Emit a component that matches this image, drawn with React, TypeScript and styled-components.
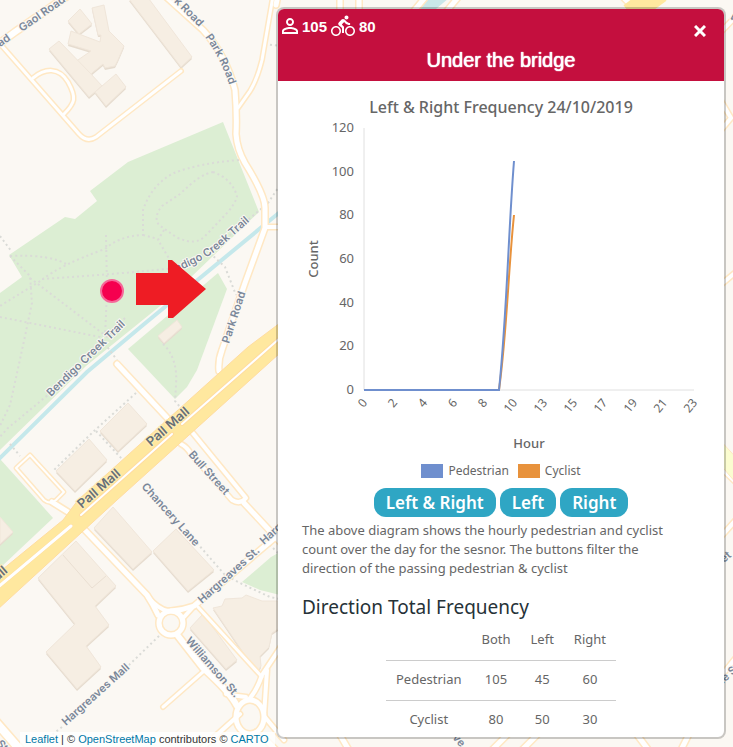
import React from "react";
import styled, { createGlobalStyle } from "styled-components";
import { MdPersonOutline, MdDirectionsBike } from "react-icons/md";

const sans = '"Noto Sans", "Open Sans", sans-serif';
const arial = '"Liberation Sans", Arial, sans-serif';

const GlobalStyle = createGlobalStyle`
  * { box-sizing: border-box; }
  html, body, #root { height: 100%; }
  body { margin: 0; background: #fbf8f3; overflow: hidden; }
`;

const Page = styled.main`
  position: relative;
  display: flex;
  justify-content: flex-end;
  height: 100vh;
  padding: 7px 7px 8px;
  overflow: hidden;
`;

const MapCanvas = styled.svg`
  position: absolute;
  inset: 0;
  width: 100%;
  height: 100%;
  font-family: "Inter", "Lato", sans-serif;
`;

const Attribution = styled.div`
  position: absolute;
  left: 20px;
  bottom: 0;
  padding: 0 6px 0 5px;
  background: rgba(255, 255, 255, 0.8);
  color: #333;
  font: 11px/15px ${arial};
  white-space: nowrap;
  a { color: #0078a8; text-decoration: none; }
`;

const Panel = styled.section`
  position: relative;
  display: flex;
  flex-direction: column;
  width: 100%;
  max-width: 450px;
  border: 2px solid rgba(0, 0, 0, 0.2);
  border-radius: 8px;
  background: #fff;
  background-clip: padding-box;
  overflow: hidden;
  color: #666;
  font: 13px/19px ${sans};
`;

const Header = styled.header`
  flex: none;
  padding: 4px 16px 8px 0;
  background: #c40f3e;
  color: #fff;
  font-family: ${arial};
`;

const HeaderRow = styled.div`
  display: flex;
  align-items: center;
  justify-content: space-between;
  height: 35px;
`;

const Counts = styled.div`
  display: flex;
  align-items: center;
  align-self: flex-start;
  height: 26px;
  gap: 4px;
`;

const CountItem = styled.span`
  display: flex;
  align-items: center;
  font-size: 15px;
  font-weight: 700;
  svg { width: 24px; height: 24px; }
`;

const BikeItem = styled(CountItem)`
  gap: 4px;
`;

const CloseButton = styled.button`
  display: flex;
  margin: 0;
  padding: 6px 2px;
  border: 0;
  background: none;
  color: inherit;
  cursor: pointer;
  svg { display: block; width: 12px; height: 12px; }
`;

const Title = styled.h1`
  margin: 0 -16px 0 0;
  font-size: 20px;
  line-height: 25px;
  font-weight: 400;
  text-align: center;
  text-shadow: 0 0 1px #fff, 0 0 1px #fff;
`;

const Body = styled.div`
  flex: 1;
  min-height: 0;
  padding: 16px 24px 0;
  overflow: hidden;
`;

const ChartTitle = styled.h2`
  margin: 0;
  font-size: 16px;
  line-height: 21px;
  font-weight: 500;
  text-align: center;
`;

const Chart = styled.svg`
  display: block;
  width: 100%;
  font-family: ${sans};
  font-size: 13px;
`;

const Legend = styled.ul`
  display: flex;
  justify-content: center;
  gap: 9px;
  margin: 0 0 7px;
  padding: 0;
  list-style: none;
  font-size: 12px;
  line-height: 20px;
`;

const LegendItem = styled.li`
  display: flex;
  align-items: center;
  gap: 5px;
`;

const Swatch = styled.span<{ $color: string }>`
  width: 22px;
  height: 14px;
  background: ${(p) => p.$color};
`;

const Filters = styled.div`
  display: flex;
  justify-content: center;
  gap: 4px;
  margin-bottom: 4px;
`;

const FilterButton = styled.button`
  padding: 0 12px;
  border: 0;
  border-radius: 12px;
  background: #2fa6c4;
  color: #fff;
  font: 600 17px/29px ${sans};
  cursor: pointer;
`;

const Description = styled.p`
  margin: 0 0 16px;
  padding-right: 20px;
`;

const SectionTitle = styled.h2`
  margin: 0;
  color: #263238;
  font-size: 19px;
  line-height: 26px;
  font-weight: 400;
`;

const Table = styled.table`
  margin: 0 auto;
  border-collapse: collapse;
  text-align: center;
  th, td { height: 40px; padding: 0 10px; font-weight: 400; }
  tbody th, tbody td { padding-bottom: 2px; }
  tbody tr { border-top: 1px solid #ccc; }
`;

type Pts = string;

const buildings: Pts[] = [
  "80,9 92,24 79,34 68,21",
  "92,8 104,5 109,31 124,46 118,60 115,66 105,68 103,64 92,73 85,80 75,62 91,51 68,44 71,31 100,42 101,35 98,35",
  "59,41 91,74 102,86 89,97 49,49",
  "116,74 126,87 106,106 95,92",
  "129,-1 149,-1 192,57 181,67",
  "128,403 147,424 118,451 100,431",
  "89,439 107,460 75,491 56,471",
  "177,320 182,327 164,343 158,336",
  "0,517 13,532 0,544",
  "113,507 152,552 133,569 94,528",
  "176,529 214,570 188,591 153,551",
  "76,541 116,586 95,606 109,625 86,646 101,667 77,689 46,652 75,624 38,578",
  "203,614 237,660 226,669 190,628",
  "213,608 222,606 225,599 242,598 246,595 254,598 262,601 278,601 278,629 272,633 269,647 260,656 261,666 257,673",
];

const parks: Pts[] = [
  "223,122 128,162 90,191 97,201 75,219 65,217 9,255 22,277 0,293 0,450 86,366 165,302 259,212",
  "218,273 227,289 197,370 187,387 175,399 128,349",
  "0,459 37,500 53,518 0,568",
  "271,557 242,582 260,590 280,595 280,552",
];

const roads: { d: string; w: number }[] = [
  { d: "M-4 46 L15 32 L70 -6", w: 6 },
  { d: "M2 46 L79 134 Q87 143 96 137 L181 71", w: 3 },
  { d: "M33 78 C45 68 59 67 68 82 C77 98 75 103 64 114", w: 3 },
  { d: "M273 -4 L262 60 Q257 80 250 91 L238 108", w: 3 },
  { d: "M163 -6 L203 30 Q226 55 235 90 Q237 115 236 134 Q237 149 245 163 Q265 195 265 208 V228 L245 283 L222 350 Q218 360 219 371", w: 5 },
  { d: "M265 227 H284", w: 4 },
  { d: "M117 364 L171 422", w: 5 },
  { d: "M181 444 Q187 447 191 454 L232 500 Q240 505 246 498 L192 432", w: 4 },
  { d: "M244 503 L284 546", w: 5 },
  { d: "M30 455 L16 468 L44 500 Q50 505 56 500 L64 492 Z", w: 2 },
  { d: "M52 502 L68 512", w: 5 },
  { d: "M83 528 L147 595 Q153 604 158 615", w: 5 },
  { d: "M171 611 Q183 610 194 606 L284 530", w: 5 },
  { d: "M148 597 Q158 609 168 611 M184 617 L194 606", w: 4 },
  { d: "M178 636 L203 668 Q230 692 237 706", w: 6 },
  { d: "M198 607 L262 677", w: 3 },
  { d: "M204 671 L163 707", w: 3 },
  { d: "M284 642 L262 675 Q257 690 250 698 M267 670 L264 716 L284 740", w: 4 },
  { d: "M240 714 L200 750", w: 4 },
  { d: "M226 694 Q236 696 246 697", w: 4 },
  { d: "M-5 721 L22 752", w: 8 },
  { d: "M278 752 L268 742 M350 752 L340 735 M490 752 L510 732 M520 752 L540 732 M650 752 L635 732 M680 752 L690 732", w: 5 },
  { d: "M340 12 V-5 M359 12 V-5 M276 5 L278 -5 M413 12 L428 -6 M446 12 L460 -5 M638 12 L620 -6", w: 5 },
  { d: "M715 38 L740 12 M718 96 L731 118 L716 136 M718 287 L742 267 M718 465 L742 488 M718 540 L742 513 M718 680 L742 650", w: 4 },
];

const trails: string[] = [
  "M239 160 Q200 163 174 173 Q152 184 143 210 V235 Q119 236 105 249 Q60 265 42 280 L0 306",
  "M213 172 Q200 174 180 194 L162 206 Q153 217 159 225 L176 237 Q196 247 206 235 L228 212 Q240 197 236 193 Q230 178 213 172",
  "M164 230 L158 240 L170 260 M143 235 L158 239",
  "M106 235 L107 290 L105 338 M10 256 L30 276 L32 303 Q20 360 10 405 L-2 430",
  "M10 256 Q50 254 68 265 M42 279 Q120 274 185 267 M30 278 L106 336 M0 317 L100 337 L117 360",
  "M280 185 L268 203 L210 252 M210 253 L225 267 L236 295 M265 44 L280 46",
  "M125 318 L60 385 L8 428 L-3 440 M10 444 L20 456",
  "M163 344 Q178 358 176 385 L175 401 L180 407",
  "M136 393 L94 431 L54 470 M96 431 L122 459",
  "M197 543 L225 575 L242 584 L270 597 L280 599 M266 541 L280 555",
  "M159 636 L129 665 M62 727 L48 738 M0 236 L12 252",
];

const labels: { x: number; y: number; r: number; s: number; t: string; major?: boolean }[] = [
  { x: 22, y: 32, r: -35, s: 11, t: "Gaol Road" },
  { x: -11, y: 55, r: -35, s: 11, t: "Road" },
  { x: 51, y: 397, r: -44, s: 11, t: "Bendigo Creek Trail" },
  { x: 229, y: 344, r: -72, s: 11, t: "Park Road" },
  { x: 151, y: 447, r: -41, s: 13, t: "Pall Mall", major: true },
  { x: 82, y: 509, r: -41, s: 13, t: "Pall Mall", major: true },
  { x: -31, y: 606, r: -41, s: 13, t: "Pall Mall", major: true },
  { x: 188, y: 455, r: 48, s: 11, t: "Bull Street" },
  { x: 141, y: 487, r: 48, s: 11, t: "Chancery Lane" },
  { x: 202, y: 604, r: -42, s: 11, t: "Hargreaves St." },
  { x: 264, y: 545, r: -42, s: 11, t: "Hargreaves St." },
  { x: 66, y: 726, r: -42, s: 11, t: "Hargreaves Mall" },
  { x: 185, y: 641, r: 49, s: 11, t: "Williamson St." },
  { x: -4, y: 744, r: 48, s: 11, t: "St." },
  { x: 452, y: 738, r: 48, s: 11, t: "ve" },
  { x: 724, y: 563, r: -40, s: 11, t: "et" },
  { x: 723, y: 684, r: -42, s: 11, t: "le S" },
  { x: 729, y: 17, r: 48, s: 11, t: "v" },
];

function StreetMap() {
  return (
    <MapCanvas viewBox="0 0 733 747" preserveAspectRatio="xMinYMin slice" role="img" aria-label="Street map">
      <rect width="733" height="747" fill="#fbf8f3" />
      {parks.map((p) => <polygon key={p} points={p} fill="#dceed3" />)}
      {buildings.map((p) => (
        <g key={p}>
          <polygon points={p} fill="#e6dccf" transform="translate(0 2)" />
          <polygon points={p} fill="#f6eee3" stroke="#f0e6da" strokeWidth="1" />
        </g>
      ))}
      <path d="M63 555 L92 588 L106 576" fill="none" stroke="#eadfd2" />
      <path d="M-4 462 L87 372 L143 325 L280 212" fill="none" stroke="#c5e8eb" strokeWidth="4" />
      <path d="M420 14 L446 -8" stroke="#c9e7e9" strokeWidth="13" />
      {trails.map((d) => (
        <path key={d} d={d} fill="none" stroke="#dadbd7" strokeWidth="2" strokeDasharray="2 3" />
      ))}
      <g fill="none" stroke="#ffe8c4" strokeLinecap="round" strokeLinejoin="round">
        {roads.map((r) => <path key={r.d} d={r.d} strokeWidth={r.w + 3} />)}
        <circle cx="171" cy="623" r="12" strokeWidth="8" />
        <ellipse cx="250" cy="717" rx="14" ry="17" strokeWidth="8" />
      </g>
      <g fill="none" stroke="#fff" strokeLinecap="round" strokeLinejoin="round">
        {roads.map((r) => <path key={r.d} d={r.d} strokeWidth={r.w} />)}
        <circle cx="171" cy="623" r="12" strokeWidth="5" />
        <ellipse cx="250" cy="717" rx="14" ry="17" strokeWidth="5" />
      </g>
      <polygon
        points="280,323 248,347 78,500 63,520 -3,574 -3,610 117,500 280,353"
        fill="#ffe89f"
        stroke="#ffdca0"
      />
      <g fill="none" strokeLinecap="round">
        <path d="M-3 588 L71 526 M81 515 L172 434 M182 424 L280 338" stroke="#ffdca0" strokeWidth="4" />
        <path d="M-3 588 L71 526" stroke="#fff" strokeWidth="3" />
        <path d="M81 515 L172 434 M182 424 L280 338" stroke="#fff" strokeWidth="2" />
      </g>
      <path d="M630 14 L660 -8" stroke="#ffe89f" strokeWidth="22" />
      <path d="M718 438 L742 464 L742 490 L718 462 Z" fill="#fbfdd0" stroke="#ffe8c4" />
      <defs>
        <path id="park-road-upper" d="M161 -11 L206 34 L220 48" />
        <path id="park-road-lower" d="M205 37 Q223 62 232 94" />
        <path id="creek-trail" d="M176 272 Q199 263 216 251 L274 200" />
      </defs>
      <g fill="#7a8799" stroke="#fbf8f3" strokeWidth="2" paintOrder="stroke" fontWeight="600">
        {labels.map((l, i) => (
          <text
            key={i}
            fontSize={l.s}
            fill={l.major ? "#687077" : undefined}
            stroke={l.major ? "#ffedb8" : undefined}
            transform={`translate(${l.x} ${l.y}) rotate(${l.r})`}
          >
            {l.t}
          </text>
        ))}
        <text fontSize="11"><textPath href="#park-road-upper">Park Road</textPath></text>
        <text fontSize="11"><textPath href="#park-road-lower">Park Road</textPath></text>
        <text fontSize="11"><textPath href="#creek-trail">ndigo Creek Trail</textPath></text>
      </g>
      <circle cx="112" cy="291" r="11" fill="#f5004f" stroke="#f5699a" strokeWidth="2" />
      <polygon points="136,273 168,273 168,260 172,260 206,289 173,318 168,318 168,305 136,305" fill="#ee1c24" />
    </MapCanvas>
  );
}

const pedestrian = [0, 0, 0, 0, 0, 0, 0, 0, 0, 0, 105];
const cyclist = [0, 0, 0, 0, 0, 0, 0, 0, 0, 0, 80];
const hours = ["0", "2", "4", "6", "8", "10", "13", "15", "17", "19", "21", "23"];
const counts = [120, 100, 80, 60, 40, 20, 0];

const BASE = 272;
const px = (i: number) => 62 + i * 15;
const py = (v: number) => BASE - Math.round((v * 262) / 120);

function curve(values: number[]) {
  const last = values.length - 1;
  const top = py(values[last]);
  const mid = Math.round((BASE - top) / 3);
  return `M${px(0)} ${BASE} H${px(last - 1)} C${px(last) - 7} ${BASE - mid} ${px(last) - 6} ${top + mid} ${px(last)} ${top}`;
}

function FrequencyChart() {
  return (
    <Chart viewBox="0 0 398 343" role="img" aria-label="Hourly count of pedestrians and cyclists">
      <path d="M62 10 V272 H392" fill="none" stroke="#e0e0e0" />
      <g fill="#666">
        {counts.map((c) => (
          <text key={c} x="52" y={py(c) + 4} textAnchor="end">{c}</text>
        ))}
        {hours.map((h, i) => (
          <text key={h} fontSize="12" textAnchor="end" transform={`translate(${66 + i * 30} 285) rotate(-50)`}>
            {h}
          </text>
        ))}
        <text fontWeight="500" textAnchor="middle" transform="translate(16 141) rotate(-90)">Count</text>
        <text fontWeight="500" textAnchor="middle" x="227" y="330">Hour</text>
      </g>
      <path d={curve(cyclist)} fill="none" stroke="#e8923c" strokeWidth="2" />
      <path d={curve(pedestrian)} fill="none" stroke="#6f8fce" strokeWidth="2" />
    </Chart>
  );
}

const totals = [
  { name: "Pedestrian", values: [105, 45, 60] },
  { name: "Cyclist", values: [80, 50, 30] },
];

export default function App() {
  return (
    <Page>
      <GlobalStyle />
      <StreetMap />
      <Attribution>
        <a href="#leaflet">Leaflet</a> | © <a href="#osm">OpenStreetMap</a> contributors © <a href="#carto">CARTO</a>
      </Attribution>
      <Panel>
        <Header>
          <HeaderRow>
            <Counts>
              <CountItem><MdPersonOutline />105</CountItem>
              <BikeItem><MdDirectionsBike />80</BikeItem>
            </Counts>
            <CloseButton type="button" aria-label="Close">
              <svg viewBox="0 0 12 12" aria-hidden="true">
                <path d="M1 1 L11 11 M11 1 L1 11" stroke="currentColor" strokeWidth="3" />
              </svg>
            </CloseButton>
          </HeaderRow>
          <Title>Under the bridge</Title>
        </Header>
        <Body>
          <ChartTitle>Left &amp; Right Frequency 24/10/2019</ChartTitle>
          <FrequencyChart />
          <Legend>
            <LegendItem><Swatch $color="#6f8fce" />Pedestrian</LegendItem>
            <LegendItem><Swatch $color="#e8923c" />Cyclist</LegendItem>
          </Legend>
          <Filters>
            <FilterButton type="button">Left &amp; Right</FilterButton>
            <FilterButton type="button">Left</FilterButton>
            <FilterButton type="button">Right</FilterButton>
          </Filters>
          <Description>
            The above diagram shows the hourly pedestrian and cyclist count over the day for the sesnor. The
            buttons filter the direction of the passing pedestrian &amp; cyclist
          </Description>
          <SectionTitle>Direction Total Frequency</SectionTitle>
          <Table>
            <thead>
              <tr>
                <td />
                <th scope="col">Both</th>
                <th scope="col">Left</th>
                <th scope="col">Right</th>
              </tr>
            </thead>
            <tbody>
              {totals.map((row) => (
                <tr key={row.name}>
                  <th scope="row">{row.name}</th>
                  {row.values.map((v, i) => <td key={i}>{v}</td>)}
                </tr>
              ))}
            </tbody>
          </Table>
        </Body>
      </Panel>
    </Page>
  );
}
